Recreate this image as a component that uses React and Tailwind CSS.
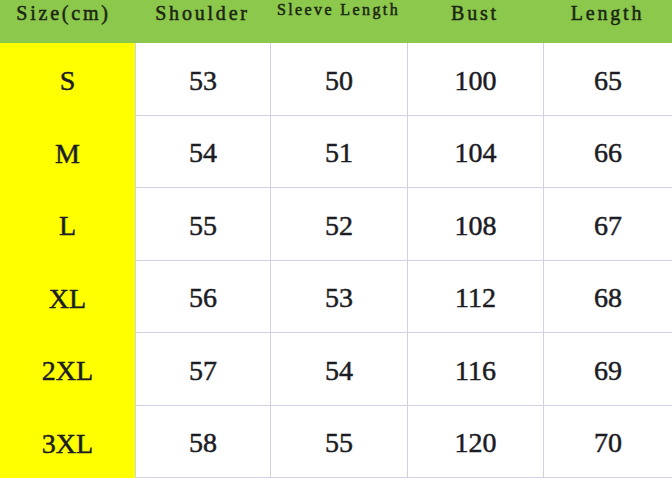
const headers = ["Size(cm)", "Shoulder", "Sleeve Length", "Bust", "Length"];

const rows = [
  ["S", 53, 50, 100, 65],
  ["M", 54, 51, 104, 66],
  ["L", 55, 52, 108, 67],
  ["XL", 56, 53, 112, 68],
  ["2XL", 57, 54, 116, 69],
  ["3XL", 58, 55, 120, 70],
];

export default function App() {
  return (
    <div className="h-[478px] w-[672px] overflow-hidden bg-white">
      <div className="grid h-full grid-cols-[135px_135px_137px_136px_1fr] grid-rows-[43px_repeat(6,1fr)]">
        {headers.map((h, i) => (
          <div
            key={h}
            className={
              "flex justify-center bg-[#8cc84c] font-['Liberation_Serif',serif] leading-none text-[#1b2613] [-webkit-text-stroke:0.5px_#1b2613] " +
              (i === 2 ? "pt-[2px] text-[16px] tracking-[2.4px]" : "pt-[3px] text-[20px] tracking-[2.8px]") +
              (i === 0 ? " pr-[8px]" : "")
            }
          >
            {h}
          </div>
        ))}
        {rows.map((r) =>
          r.map((v, i) => (
            <div
              key={r[0] + i}
              className={
                "flex items-center justify-center pt-[4px] font-['Liberation_Serif',serif] text-[28px] text-[#1c1c24] [-webkit-text-stroke:0.5px_#1c1c24] " +
                (i === 0
                  ? "bg-[#ffff00]"
                  : "border-b border-l border-[#cfd2e2] bg-white")
              }
            >
              {v}
            </div>
          ))
        )}
      </div>
    </div>
  );
}
